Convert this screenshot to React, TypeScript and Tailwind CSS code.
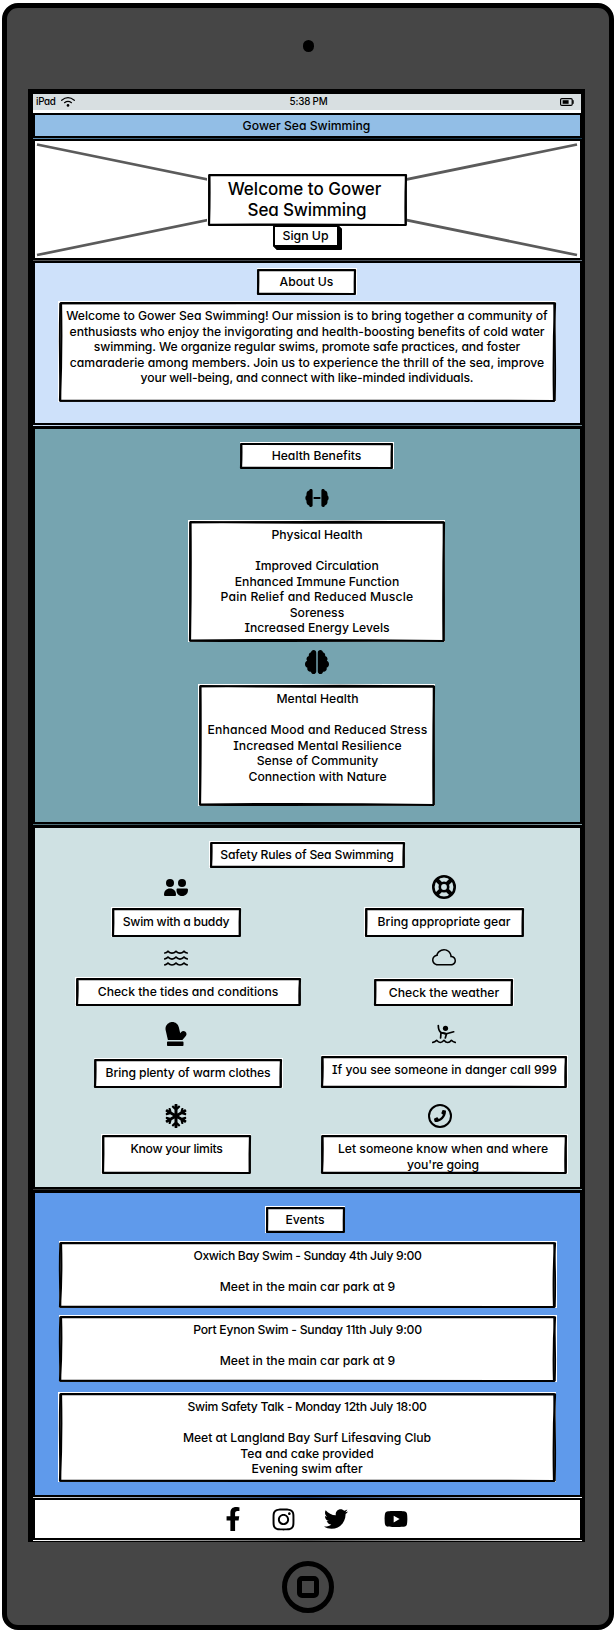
import type { ReactNode } from "react";
import {
  FaFacebookF,
  FaInstagram,
  FaMitten,
  FaPhone,
  FaSnowflake,
  FaTwitter,
  FaYoutube,
} from "react-icons/fa";
import { FaBrain } from "react-icons/fa6";
import { BsCloud } from "react-icons/bs";

/** White panel with a slightly uneven, hand-drawn outline. */
function Box({ className, children }: { className: string; children: ReactNode }) {
  return (
    <div className={`relative shrink-0 bg-white text-center whitespace-nowrap ${className}`}>
      <svg
        className="pointer-events-none absolute top-[1.5px] left-[1.5px] h-[calc(100%-3px)] w-[calc(100%-3px)] overflow-visible"
        viewBox="0 0 100 100"
        preserveAspectRatio="none"
        fill="none"
        stroke="#000"
        strokeLinejoin="round"
      >
        <path d="M0.2 0 Q50 0.8 100 0.4 Q99.6 50 99.8 100 Q50 98.8 0 99.6 Q0.4 50 0.2 0Z" strokeWidth="2.2" vectorEffect="non-scaling-stroke" />
        <path d="M0 0.4 Q50 -0.8 99.8 0 Q100.2 50 100 99.6 Q50 100.6 0.1 100 Q-0.2 50 0 0.4Z" strokeWidth="1.5" vectorEffect="non-scaling-stroke" />
      </svg>
      {children}
    </div>
  );
}

type Line = string | { text: string; tracking: string };

function Lines({ items }: { items: Line[] }) {
  return (
    <>
      {items.map((t, i) =>
        typeof t === "string" ? (
          <p key={i} className="h-[15.5px]">{t}</p>
        ) : (
          <p key={i} className={`h-[15.5px] ${t.tracking}`}>{t.text}</p>
        ),
      )}
    </>
  );
}

function Divider({ className }: { className: string }) {
  return <div className={`h-px shrink-0 bg-linear-to-r ${className}`} />;
}

function Dumbbell() {
  return (
    <svg className="h-[18px] w-6" viewBox="0 0 24 18">
      <path d="M7.600 1.400v15.200c0 1.800-3.400 1.800-3.400-.2C2 15.800 1.300 14.400 1.500 11.600 0 11 0 7 1.500 6.400 1.300 3.600 2 2.200 4.200 1.600 4.200-.4 7.600-.4 7.600 1.400Z" />
      <path d="M16.400 1.400v15.200c0 1.800 3.400 1.800 3.400-.2C22 15.800 22.700 14.400 22.500 11.600 24 11 24 7 22.500 6.400 22.700 3.600 22 2.200 19.800 1.600 19.800-.4 16.400-.4 16.400 1.400Z" />
      <rect x="8.600" y="8" width="6.800" height="2" />
    </svg>
  );
}

function LifeRing() {
  return (
    <svg className="mt-[7px] size-6 shrink-0" viewBox="0 0 24 24" fill="none" stroke="#000">
      <circle cx="12" cy="12" r="10.700" strokeWidth="2.600" />
      <circle cx="12" cy="12" r="4.200" strokeWidth="2.600" />
      <path d="M4 4 9 9M20 4 15 9M4 20 9 15M20 20 15 15" strokeWidth="4" />
      <circle cx="12" cy="12" r="1.600" fill="#cfe1e3" stroke="none" />
    </svg>
  );
}

function Buddies() {
  return (
    <svg className="h-[17px] w-6" viewBox="0 0 24 17">
      <circle cx="6" cy="4" r="4" />
      <circle cx="18" cy="4" r="4" />
      <path d="M0 15.500c0-3.600 2.400-6 6-6s6 2.400 6 6c0 1-.5 1.500-1.500 1.500h-9C.5 17 0 16.500 0 15.500Z" />
      <path d="M13.500 9.500h9c1 0 1.500.5 1.500 1.500 0 3.600-2.400 6-6 6s-5.500-2.400-5.500-6c0-1 .2-1.500 1-1.500Z" />
    </svg>
  );
}

function Waves() {
  return (
    <svg className="h-4 w-6" viewBox="0 0 24 16" fill="none" stroke="#000" strokeWidth="1.700" strokeLinecap="round">
      <path d="M.8 3Q2.500 2.800 4 1.300 6 3.200 8 3.200T12 1.300Q14 3.200 16 3.200T20 1.300Q21.500 2.800 23.200 3" />
      <path d="M.8 8.900Q2.500 8.700 4 7.200 6 9.100 8 9.100T12 7.200Q14 9.100 16 9.100T20 7.200Q21.500 8.700 23.200 8.900" />
      <path d="M.8 14.800Q2.500 14.600 4 13.100 6 15 8 15T12 13.100Q14 15 16 15T20 13.100Q21.500 14.600 23.200 14.800" />
    </svg>
  );
}

function Drowning() {
  return (
    <svg className="h-5 w-6" viewBox="0 0 24 20" fill="none" stroke="#000" strokeWidth="1.700" strokeLinecap="round" strokeLinejoin="round">
      <circle cx="13.500" cy="4.300" r="2.600" fill="#000" stroke="none" />
      <path d="M6.300 1.500Q6.300 6.500 9 8.600L14.500 9.800 21.700 7.800" />
      <path d="M9 8.600 8.600 14M14.500 9.800 13.300 14M9 8.600 14.500 9.800" />
      <path d="M.8 18.300Q2.800 18.100 4.600 16.300 6.500 18.500 8.300 18.500T12 16.300Q13.800 18.500 15.700 18.500T19.400 16.300Q21 18.100 23.200 18.300" />
    </svg>
  );
}

function Wifi() {
  return (
    <svg className="mt-[3px] ml-[5px] h-[10px] w-[14px]" viewBox="0 0 14 10" fill="none" stroke="#000" strokeLinecap="round">
      <path d="M.7 3.300Q7-1.900 13.300 3.300" strokeWidth="1.200" />
      <path d="M3.500 5.700Q7 3 10.500 5.700" strokeWidth="1.200" />
      <circle cx="7" cy="8.400" r="1.300" fill="#000" stroke="none" />
    </svg>
  );
}

function Battery() {
  return (
    <svg className="mt-1 mr-[7px] h-2 w-[14px]" viewBox="0 0 14 8">
      <rect x=".6" y=".6" width="11.600" height="6.800" rx="1.200" fill="none" stroke="#000" strokeWidth="1.200" />
      <rect x="2.600" y="2.200" width="6" height="3.600" />
      <rect x="12.400" y="2.200" width="1.300" height="3.600" />
    </svg>
  );
}

export default function App() {
  return (
    <div className="h-[1632px] w-[616px] bg-white pt-[3px] pl-[2px] font-['Inter','Liberation_Sans',sans-serif] text-[12.2px] leading-[15.5px] font-medium text-black [font-feature-settings:'cv11','cv08','cv01']">
      <div className="flex h-[1627px] w-[612px] flex-col items-center rounded-[16px] border-[5px] border-black bg-[#464646]">
        <div className="mt-[32px] h-3 w-[11px] shrink-0 rounded-full bg-black" />

        <main className="mt-[37px] mr-[3px] flex h-[1453px] w-[557px] shrink-0 flex-col bg-black pt-[5px] pr-[3px] pl-[5px]">
          <div className="mr-px flex h-[19px] shrink-0 border-b-[3px] border-white bg-[#d8dfe1] text-[9.800px] leading-4">
            <div className="flex flex-1 pl-[3px]">
              <span className="tracking-[-0.3px]">iPad</span>
              <Wifi />
            </div>
            <span className="tracking-[-0.2px]">5:38 PM</span>
            <div className="flex flex-1 justify-end"><Battery /></div>
          </div>

          <header className="h-[25px] shrink-0 border-2 border-black bg-[#92bee6] pr-0.5 text-center text-[12.200px] leading-[22px]">
            Gower Sea Swimming
          </header>
          <Divider className="from-[#5d8cb0] via-[#0b1a26] to-[#16384f]" />

          <section className="relative flex h-[121px] shrink-0 flex-col items-center border-2 border-black bg-white">
            <svg className="absolute inset-0 h-full w-full" viewBox="0 0 545 117" preserveAspectRatio="none">
              <path d="M2 3.500 542 114M542 3.500 2 114" fill="none" stroke="#5b5b5b" strokeWidth="2.800" />
            </svg>
            <Box className="mt-[32px] mr-px h-[53px] w-[200px] pt-[6px] text-[17px] leading-[21px]">
              <p className="pr-[5px]">Welcome to Gower</p>
              <p className="tracking-[-0.150px]">Sea Swimming</p>
            </Box>
            <button className="relative -mt-px mr-[4px] h-[22px] w-[66px] rounded-[1px] border-2 border-black bg-white text-[12.300px] leading-[18px] font-medium shadow-[1px_1px_0_#000,2px_2px_0_#000,3px_3px_0_#000]">
              Sign Up
            </button>
          </section>
          <Divider className="from-[#555] via-[#3c4148] to-[#6c7885]" />

          <section className="flex h-[164px] shrink-0 flex-col items-center border-2 border-black bg-[#cee1fa]">
            <Box className="mt-[5px] mr-[2px] h-[27px] w-[100px] pt-[6px]">About Us</Box>
            <Box className="mt-[6px] mr-px h-[101px] w-[498px] pt-[7px]">
              <Lines
                items={[
                  { text: "Welcome to Gower Sea Swimming! Our mission is to bring together a community of", tracking: "tracking-[-0.04px]" },
                  { text: "enthusiasts who enjoy the invigorating and health-boosting benefits of cold water", tracking: "tracking-[-0.04px]" },
                  { text: "swimming. We organize regular swims, promote safe practices, and foster", tracking: "tracking-[-0.1px]" },
                  "camaraderie among members. Join us to experience the thrill of the sea, improve",
                  { text: "your well-being, and connect with like-minded individuals.", tracking: "tracking-[-0.14px]" },
                ]}
              />
            </Box>
          </section>
          <Divider className="from-[#cee1fa] via-[#25343c] to-[#6f8790]" />

          <section className="flex h-[398px] shrink-0 flex-col items-center border-2 border-t-[3px] border-black bg-[#76a4b0] pl-[18px]">
            <Box className="mt-[13px] h-[27px] w-[154px] pt-[6px]">Health Benefits</Box>
            <div className="mt-5"><Dumbbell /></div>
            <Box className="mt-[13px] h-[122px] w-[257px] pt-[7px] pl-px">
              <Lines
                items={[
                  "Physical Health",
                  "",
                  "Improved Circulation",
                  "Enhanced Immune Function",
                  { text: "Pain Relief and Reduced Muscle", tracking: "tracking-[0.17px]" },
                  "Soreness",
                  "Increased Energy Levels",
                ]}
              />
            </Box>
            <FaBrain className="mt-2 size-6 shrink-0" />
            <Box className="mt-[10px] h-[122px] w-[237px] pt-[7px] pl-[2px]">
              <Lines
                items={[
                  "Mental Health",
                  "",
                  { text: "Enhanced Mood and Reduced Stress", tracking: "tracking-[0.13px]" },
                  { text: "Increased Mental Resilience", tracking: "tracking-[0.08px]" },
                  "Sense of Community",
                  "Connection with Nature",
                ]}
              />
            </Box>
          </section>
          <Divider className="from-[#54757e] via-[#10191c] to-[#87a2a8]" />

          <section className="flex h-[364px] shrink-0 flex-col border-2 border-t-[3px] border-black bg-[#cfe1e3]">
            <Box className="mt-[13px] ml-[174px] h-[27px] w-[196px] pt-[6px] tracking-[-0.18px]">Safety Rules of Sea Swimming</Box>
            <div className="flex">
              <div className="flex w-[282px] flex-col items-center">
                <div className="mt-[11px] h-[17px]"><Buddies /></div>
                <Box className="mt-[11px] h-[30px] w-[130px] pt-[7px] tracking-[-0.25px]">Swim with a buddy</Box>
                <div className="mt-[13px] h-4"><Waves /></div>
                <Box className="mt-[11px] ml-[24px] h-[29px] w-[226px] pt-[7px]">Check the tides and conditions</Box>
                <FaMitten className="mt-4 size-6 shrink-0" />
                <Box className="mt-3 ml-[24px] h-[30px] w-[189px] pt-[7px] tracking-[-0.12px]">Bring plenty of warm clothes</Box>
                <FaSnowflake className="mt-4 size-6 shrink-0" />
                <Box className="mt-[6px] h-10 w-[150px] pt-[7px] pl-px tracking-[-0.26px]">Know your limits</Box>
              </div>
              <div className="flex w-[254px] flex-col items-center">
                <LifeRing />
                <Box className="mt-2 h-[30px] w-[160px] pt-[7px]">Bring appropriate gear</Box>
                <BsCloud className="mt-[9px] size-6 shrink-0" />
                <Box className="mt-2 -ml-px h-[28px] w-[140px] pt-[7px] pl-px">Check the weather</Box>
                <div className="mt-[18px] h-5"><Drowning /></div>
                <Box className="mt-[11px] h-[33px] w-[247px] pt-[7px] pl-px">If you see someone in danger call 999</Box>
                <div className="mt-4 mr-2 flex size-6 shrink-0 items-center justify-center rounded-full border-2 border-black">
                  <FaPhone className="size-[12px]" />
                </div>
                <Box className="mt-[6px] h-10 w-[247px] pt-[7px] pr-[2px]">
                  <Lines items={["Let someone know when and where", { text: "you're going", tracking: "tracking-[-0.1px]" }]} />
                </Box>
              </div>
            </div>
          </section>
          <Divider className="from-[#333] via-[#3b4443] to-[#8ba0a5]" />

          <section className="flex h-[307px] shrink-0 flex-col items-center border-2 border-t-[3px] border-black bg-[#5f9aeb]">
            <Box className="mt-[13px] mr-[5px] h-[27px] w-[80px] pt-[6px]">Events</Box>
            <Box className="mt-2 h-[67px] w-[498px] pt-[7px]">
              <Lines
                items={[
                  { text: "Oxwich Bay Swim - Sunday 4th July 9:00", tracking: "tracking-[-0.37px]" },
                  "",
                  "Meet in the main car park at 9",
                ]}
              />
            </Box>
            <Box className="mt-[7px] h-[67px] w-[498px] pt-[7px]">
              <Lines
                items={[
                  { text: "Port Eynon Swim - Sunday 11th July 9:00", tracking: "tracking-[-0.25px]" },
                  "",
                  "Meet in the main car park at 9",
                ]}
              />
            </Box>
            <Box className="mt-[10px] mr-px h-[90px] w-[498px] pt-[7px]">
              <Lines
                items={[
                  { text: "Swim Safety Talk - Monday 12th July 18:00", tracking: "tracking-[-0.3px]" },
                  "",
                  { text: "Meet at Langland Bay Surf Lifesaving Club", tracking: "tracking-[-0.05px]" },
                  "Tea and cake provided",
                  "Evening swim after",
                ]}
              />
            </Box>
          </section>
          <Divider className="from-[#ddd] via-[#1a3f7a] to-white" />

          <footer className="flex h-[42px] shrink-0 items-center border-2 border-black bg-white pl-[186px]">
            <FaFacebookF className="h-6 w-6" />
            <FaInstagram className="ml-[26px] size-[25px]" />
            <FaTwitter className="ml-[28px] size-6" />
            <FaYoutube className="ml-[36px] size-6" />
          </footer>
          <Divider className="from-white via-[#555] to-white" />
        </main>

        <div className="mt-[19px] flex size-[52px] shrink-0 items-center justify-center rounded-full border-[5px] border-black">
          <div className="size-[22px] rounded-[5px] border-[5px] border-black" />
        </div>
      </div>
    </div>
  );
}
